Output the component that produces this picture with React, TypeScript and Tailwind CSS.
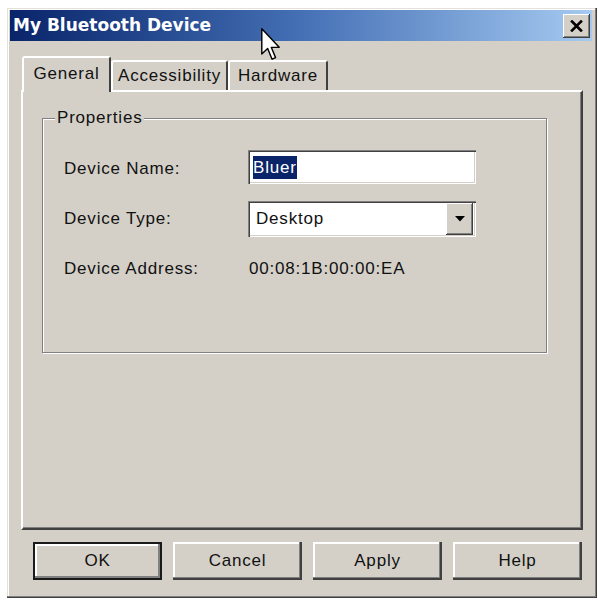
import React from 'react';

const tabs = [
  { name: 'General', width: 'w-[89px]', active: true },
  { name: 'Accessibility', width: 'w-[117px]', active: false },
  { name: 'Hardware', width: 'w-[100px]', active: false },
];

const buttons = ['OK', 'Cancel', 'Apply', 'Help'];

const CloseGlyph = () => (
  <svg width="13" height="12" viewBox="0 0 13 12">
    <path d="M2 1.5 L11 10.5 M11 1.5 L2 10.5" stroke="#000" strokeWidth="2.6" strokeLinecap="square" />
  </svg>
);

const DownTriangle = () => (
  <svg width="10" height="6" viewBox="0 0 10 6">
    <polygon points="0,0 10,0 5,5.5" fill="#000" />
  </svg>
);

const Cursor = () => (
  <svg width="19" height="35" viewBox="0 0 12 21" className="absolute left-[261px] top-[27px]">
    <path
      d="M0.5 0.5 L0.5 16.5 L4.2 13 L7 19.8 L9.2 18.8 L6.5 12.3 L11.5 12.3 Z"
      fill="#fff"
      stroke="#000"
      strokeWidth="0.9"
      strokeLinejoin="round"
    />
  </svg>
);

export default function App() {
  return (
    <div className="relative w-[598px] h-[603px] bg-white pt-[8px] pl-[7px] font-['Liberation_Sans',Arial,sans-serif] text-[17px] tracking-[0.8px] text-[#111]">
      <div className="flex flex-col w-[590px] h-[590px] bg-[#d4d0c8] pl-[3px] pr-[5px] pt-[2px] shadow-[inset_-1px_-1px_0_#404040,inset_-2px_-2px_0_#808080,inset_1px_1px_0_#e4e1db,inset_2px_2px_0_#ffffff]">
        {/* title bar */}
        <div className="flex items-center justify-between h-[31px] pl-[3px] pr-[2px] bg-linear-to-r from-[#0a246a] via-[#4570b5] to-[#a6caf0]">
          <span className="font-['DejaVu_Sans',Verdana,sans-serif] font-bold text-[17px] tracking-normal leading-none text-white">
            My Bluetooth Device
          </span>
          <div className="flex items-center justify-center w-[27px] h-[24px] bg-[#d4d0c8] shadow-[inset_-1px_-1px_0_#404040,inset_1px_1px_0_#ffffff,inset_-2px_-2px_0_#808080]">
            <CloseGlyph />
          </div>
        </div>

        {/* tabs */}
        <div className="flex items-end h-[34px] mt-[15px] ml-[12px]">
          {tabs.map(tab => (
            <div
              key={tab.name}
              className={`flex items-center justify-center bg-[#d4d0c8] border-t-2 border-l-2 border-white border-r-2 border-r-[#404040] rounded-t-[3px] ${tab.width} ${
                tab.active ? 'relative z-10 h-[36px] -mb-[2px] pb-[3px]' : 'h-[30px]'
              }`}
            >
              <span className="leading-[20px]">{tab.name}</span>
            </div>
          ))}
        </div>

        {/* tab panel */}
        <div className="ml-[11px] w-[562px] h-[440px] pt-[16px] pl-[19px] border-t-2 border-l-2 border-white border-r-2 border-b-2 border-r-[#404040] border-b-[#404040] shadow-[inset_-1px_-1px_0_#808080]">
          <fieldset className="w-[505px] h-[245px] pt-[22px] pl-[21px] border border-[#808080] shadow-[1px_1px_0_#ffffff,inset_1px_1px_0_#ffffff]">
            <legend className="-ml-[9px] px-[2px] leading-[20px] bg-[#d4d0c8]">Properties</legend>

            <div className="flex items-start">
              <span className="w-[184px] mt-[9px] leading-[20px]">Device Name:</span>
              <div className="flex items-center w-[228px] h-[34px] pl-[5px] bg-white shadow-[inset_1px_1px_0_#808080,inset_2px_2px_0_#404040,inset_-1px_-1px_0_#ffffff,inset_-2px_-2px_0_#d4d0c8]">
                <span className="bg-[#0a246a] text-white leading-[23px]">Bluer</span>
              </div>
            </div>

            <div className="flex items-start mt-[17px]">
              <span className="w-[184px] mt-[8px] leading-[20px]">Device Type:</span>
              <div className="flex items-center justify-between w-[228px] h-[36px] pl-[8px] pr-[3px] bg-white shadow-[inset_1px_1px_0_#808080,inset_2px_2px_0_#404040,inset_-1px_-1px_0_#ffffff,inset_-2px_-2px_0_#d4d0c8]">
                <span className="leading-[20px]">Desktop</span>
                <div className="flex items-center justify-center w-[27px] h-[32px] bg-[#d4d0c8] shadow-[inset_-1px_-1px_0_#404040,inset_1px_1px_0_#ffffff,inset_-2px_-2px_0_#808080]">
                  <DownTriangle />
                </div>
              </div>
            </div>

            <div className="flex items-start mt-[22px]">
              <span className="w-[184px] leading-[20px]">Device Address:</span>
              <span className="pl-[1px] leading-[20px]">00:08:1B:00:00:EA</span>
            </div>
          </fieldset>
        </div>

        {/* dialog buttons */}
        <div className="flex gap-[11px] ml-[23px] mt-[12px]">
          {buttons.map(label => (
            <div
              key={label}
              className={`flex items-center justify-center w-[129px] h-[38px] bg-[#d4d0c8] ${
                label === 'OK'
                  ? 'border-2 border-[#1a1a1a] shadow-[inset_-2px_-2px_0_#808080,inset_2px_2px_0_#ffffff]'
                  : 'shadow-[inset_-2px_-2px_0_#404040,inset_-3px_-3px_0_#808080,inset_2px_2px_0_#ffffff]'
              }`}
            >
              <span className="leading-[20px]">{label}</span>
            </div>
          ))}
        </div>
      </div>
      <Cursor />
    </div>
  );
}
